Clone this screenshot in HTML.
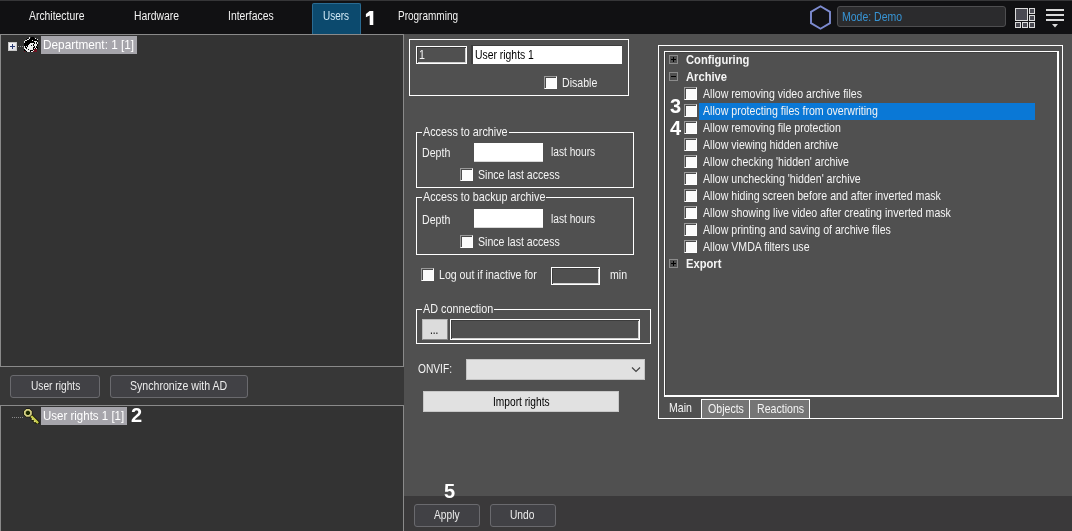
<!DOCTYPE html>
<html><head><meta charset="utf-8">
<style>
*{box-sizing:border-box;margin:0;padding:0}
html,body{width:1072px;height:531px;overflow:hidden;background:#505050;font-family:"Liberation Sans",sans-serif;color:#fff;position:relative}
div,span{position:absolute}
.t{white-space:nowrap;line-height:1;font-size:10.6px;color:#f4f4f4;transform:scaleY(1.22);transform-origin:0 85%;will-change:transform}
.b{font-weight:bold}
.num{white-space:nowrap;font-weight:bold;color:#fff;font-size:20px;line-height:1;will-change:transform}
#top{left:0;top:0;width:1072px;height:34px;background:#111113}
#topline{left:0;top:0;width:1072px;height:1px;background:#363638}
#users{left:312px;top:3px;width:49px;height:32px;background:#0c4a6e;border:1px solid #2a6b92;border-bottom:none;border-radius:2px 2px 0 0}
.tab{color:#f2f2f2;font-size:10.4px}
#mode{left:837px;top:6px;width:169px;height:21px;background:#2b2b2d;border:1px solid #4e4e50;border-radius:3px}
#left1{left:0;top:34px;width:404px;height:333px;background:#333;border-top:1px solid #8a8a8a;border-left:1px solid #8a8a8a;border-right:1px solid #8a8a8a;border-bottom:1px solid #8a8a8a}
#leftmid{left:0;top:367px;width:404px;height:38px;background:#373737}
#left2{left:0;top:405px;width:404px;height:126px;background:#333;border-top:1px solid #8a8a8a;border-left:1px solid #8a8a8a;border-right:1px solid #8a8a8a}
.dbtn{background:#414145;border:1px solid #6a6a6e;border-radius:3px}
.sel{background:#a6a5ab}
#bottom{left:404px;top:496px;width:668px;height:35px;background:#3a393a}
.w1{border:1px solid #fff}
.w2{border:2px solid #fff}
.gl{background:#505050;padding:0 1px}
.cb{width:13px;height:13px;background:#fbfbfb;border:1px solid;border-color:#9a9a9a #fff #fff #9a9a9a;box-shadow:inset 1px 1px 0 #4a4a4a}
.lbtn{background:#e1e1e1;border:1px solid #b4b4b4}
.tb{border:1px solid #8c8c8c;width:9px;height:9px}
</style></head><body>
<div id="top"></div>
<div id="topline"></div>
<div class="t tab" style="left:29px;top:12px">Architecture</div>
<div class="t tab" style="left:134px;top:12px">Hardware</div>
<div class="t tab" style="left:228px;top:12px">Interfaces</div>
<div id="users"></div>
<div class="t tab" style="left:323px;top:12px;color:#d2eaf7;font-size:10px">Users</div>
<svg style="position:absolute;left:360px;top:6px" width="20" height="24" viewBox="0 0 20 24"><polygon points="9.6,5 13.3,5 13.3,19 9.7,19 9.7,9.4 5.9,11.2 5.9,8.1" fill="#fff"/></svg>
<div class="t tab" style="left:398px;top:12px;font-size:10px">Programming</div>

<!-- hexagon -->
<svg style="position:absolute;left:808px;top:4px" width="26" height="26" viewBox="0 0 26 26"><polygon points="12.5,2.3 22,7.9 22,19.1 12.5,24.7 3,19.1 3,7.9" fill="none" stroke="#7d8bd0" stroke-width="1.9"/></svg>
<div id="mode"></div>
<div class="t" style="left:842px;top:12px;color:#3794d4;font-size:10.5px">Mode: Demo</div>
<!-- layout icon -->
<svg style="position:absolute;left:1014px;top:7px" width="23" height="22" viewBox="0 0 23 22">
<g fill="#4a4a52" stroke="#dcdcdc" stroke-width="1">
<rect x="1.5" y="1.5" width="12" height="12"/>
<rect x="15.5" y="1.5" width="5" height="5"/>
<rect x="15.5" y="8.5" width="5" height="5"/>
<rect x="1.5" y="15.5" width="5" height="5"/>
<rect x="8.5" y="15.5" width="5" height="5"/>
<rect x="15.5" y="15.5" width="5" height="5"/>
</g></svg>
<!-- menu icon -->
<svg style="position:absolute;left:1044px;top:7px" width="22" height="22" viewBox="0 0 22 22">
<g fill="#dadada"><rect x="2" y="2" width="18" height="2"/><rect x="2" y="7" width="18" height="2"/><rect x="2" y="12" width="18" height="2"/><polygon points="8,17 14,17 11,20.5"/></g></svg>

<div id="left1"></div>
<div id="leftmid"></div>
<div id="left2"></div>

<!-- tree 1 -->
<div style="left:8px;top:42px;width:9px;height:9px;background:linear-gradient(135deg,#fff,#d8d8e0);border:1px solid #c8c8c8"></div>
<div style="left:10px;top:46px;width:5px;height:1px;background:#2a3a70"></div>
<div style="left:12px;top:44px;width:1px;height:5px;background:#2a3a70"></div>
<div style="left:18px;top:46px;width:5px;height:1px;border-top:1px dotted #999"></div>
<svg style="position:absolute;left:23px;top:37px" width="16" height="16" viewBox="0 0 16 16" shape-rendering="crispEdges"><rect x="6" y="0" width="1" height="1" fill="#ececec"/><rect x="8" y="0" width="3" height="1" fill="#000"/><rect x="4" y="1" width="1" height="1" fill="#000"/><rect x="6" y="1" width="1" height="1" fill="#ececec"/><rect x="7" y="1" width="5" height="1" fill="#000"/><rect x="12" y="1" width="1" height="1" fill="#ececec"/><rect x="3" y="2" width="1" height="1" fill="#000"/><rect x="4" y="2" width="2" height="1" fill="#ececec"/><rect x="6" y="2" width="8" height="1" fill="#000"/><rect x="14" y="2" width="1" height="1" fill="#ececec"/><rect x="2" y="3" width="2" height="1" fill="#ececec"/><rect x="4" y="3" width="5" height="1" fill="#000"/><rect x="9" y="3" width="1" height="1" fill="#ececec"/><rect x="10" y="3" width="5" height="1" fill="#000"/><rect x="1" y="4" width="1" height="1" fill="#ececec"/><rect x="2" y="4" width="9" height="1" fill="#000"/><rect x="11" y="4" width="3" height="1" fill="#ececec"/><rect x="14" y="4" width="1" height="1" fill="#000"/><rect x="1" y="5" width="1" height="1" fill="#ececec"/><rect x="2" y="5" width="10" height="1" fill="#000"/><rect x="12" y="5" width="1" height="1" fill="#ececec"/><rect x="13" y="5" width="1" height="1" fill="#000"/><rect x="14" y="5" width="1" height="1" fill="#ececec"/><rect x="1" y="6" width="6" height="1" fill="#000"/><rect x="7" y="6" width="4" height="1" fill="#ececec"/><rect x="11" y="6" width="1" height="1" fill="#000"/><rect x="12" y="6" width="1" height="1" fill="#ececec"/><rect x="13" y="6" width="1" height="1" fill="#000"/><rect x="14" y="6" width="1" height="1" fill="#ececec"/><rect x="1" y="7" width="5" height="1" fill="#000"/><rect x="6" y="7" width="4" height="1" fill="#ececec"/><rect x="10" y="7" width="1" height="1" fill="#000"/><rect x="11" y="7" width="3" height="1" fill="#ececec"/><rect x="14" y="7" width="1" height="1" fill="#000"/><rect x="1" y="8" width="4" height="1" fill="#000"/><rect x="5" y="8" width="3" height="1" fill="#ececec"/><rect x="8" y="8" width="1" height="1" fill="#000"/><rect x="9" y="8" width="1" height="1" fill="#ececec"/><rect x="10" y="8" width="1" height="1" fill="#000"/><rect x="11" y="8" width="3" height="1" fill="#ececec"/><rect x="14" y="8" width="1" height="1" fill="#000"/><rect x="1" y="9" width="1" height="1" fill="#ececec"/><rect x="2" y="9" width="1" height="1" fill="#000"/><rect x="3" y="9" width="1" height="1" fill="#ececec"/><rect x="4" y="9" width="1" height="1" fill="#000"/><rect x="5" y="9" width="6" height="1" fill="#ececec"/><rect x="11" y="9" width="1" height="1" fill="#000"/><rect x="12" y="9" width="1" height="1" fill="#ececec"/><rect x="13" y="9" width="1" height="1" fill="#000"/><rect x="1" y="10" width="1" height="1" fill="#ececec"/><rect x="2" y="10" width="2" height="1" fill="#000"/><rect x="4" y="10" width="6" height="1" fill="#ececec"/><rect x="10" y="10" width="2" height="1" fill="#000"/><rect x="12" y="10" width="1" height="1" fill="#ececec"/><rect x="13" y="10" width="2" height="1" fill="#000"/><rect x="1" y="11" width="2" height="1" fill="#ececec"/><rect x="3" y="11" width="1" height="1" fill="#000"/><rect x="4" y="11" width="6" height="1" fill="#ececec"/><rect x="10" y="11" width="1" height="1" fill="#000"/><rect x="11" y="11" width="1" height="1" fill="#ececec"/><rect x="12" y="11" width="1" height="1" fill="#000"/><rect x="13" y="11" width="1" height="1" fill="#ececec"/><rect x="14" y="11" width="1" height="1" fill="#000"/><rect x="1" y="12" width="1" height="1" fill="#000"/><rect x="2" y="12" width="3" height="1" fill="#ececec"/><rect x="5" y="12" width="1" height="1" fill="#000"/><rect x="6" y="12" width="4" height="1" fill="#ececec"/><rect x="10" y="12" width="1" height="1" fill="#000"/><rect x="11" y="12" width="3" height="1" fill="#6e1420"/><rect x="1" y="13" width="2" height="1" fill="#000"/><rect x="3" y="13" width="4" height="1" fill="#ececec"/><rect x="7" y="13" width="3" height="1" fill="#000"/><rect x="10" y="13" width="1" height="1" fill="#ececec"/><rect x="11" y="13" width="3" height="1" fill="#6e1420"/><rect x="1" y="14" width="1" height="1" fill="#6e1420"/><rect x="3" y="14" width="1" height="1" fill="#000"/><rect x="4" y="14" width="3" height="1" fill="#ececec"/><rect x="7" y="14" width="1" height="1" fill="#000"/><rect x="8" y="14" width="2" height="1" fill="#ececec"/><rect x="10" y="14" width="4" height="1" fill="#6e1420"/></svg>
<div class="sel" style="left:41px;top:36px;width:96px;height:18px"></div>
<div class="t" style="left:43px;top:40px;font-size:11.8px;color:#fff;transform:scaleY(1.1)">Department: 1 [1]</div>

<div class="dbtn" style="left:10px;top:375px;width:90px;height:23px"></div>
<div class="t" style="left:31px;top:382px;font-size:10.2px;color:#ececec">User rights</div>
<div class="dbtn" style="left:110px;top:375px;width:138px;height:23px"></div>
<div class="t" style="left:130px;top:381px;font-size:10.6px;color:#ececec">Synchronize with AD</div>

<!-- tree 2 -->
<div style="left:12px;top:417px;width:11px;height:1px;border-top:1px dotted #8a8a8a"></div>
<svg style="position:absolute;left:22px;top:406px" width="18" height="18" viewBox="0 0 18 18">
<path d="M8.4,9.4 L15.6,16.6" stroke="#101000" stroke-width="4" stroke-linecap="round"/>
<path d="M11,12.6 L9.4,14.2 M13.2,14.8 L11.6,16.4" stroke="#101000" stroke-width="2.8"/>
<path d="M8.4,9.4 L15.4,16.4" stroke="#c6cc48" stroke-width="2.4" stroke-linecap="round"/>
<path d="M11,12.6 L9.8,13.8 M13.2,14.8 L12,16" stroke="#dcdc88" stroke-width="1.5"/>
<polygon points="8.95,8.16 7.16,9.95 4.64,9.95 2.85,8.16 2.85,5.64 4.64,3.85 7.16,3.85 8.95,5.64" fill="#1c2600" stroke="#0c0c00" stroke-width="2.8"/>
<polygon points="8.95,8.16 7.16,9.95 4.64,9.95 2.85,8.16 2.85,5.64 4.64,3.85 7.16,3.85 8.95,5.64" fill="#1c2a00" stroke="#d4cf84" stroke-width="1.8"/>
</svg>
<div class="sel" style="left:41px;top:407px;width:86px;height:18px"></div>
<div class="t" style="left:43px;top:411px;font-size:11.5px;color:#fff;transform:scaleY(1.1)">User rights 1 [1]</div>
<div class="num" style="left:131px;top:405px">2</div>

<!-- middle panel -->
<div class="w1" style="left:409px;top:39px;width:220px;height:57px"></div>
<div style="left:416px;top:46px;width:51px;height:18px;border:1px solid #fff;box-shadow:inset 1px 1px 0 #3c3c3c,inset -1px -1px 0 #d0d0d0"></div>
<div class="t" style="left:419px;top:50px;font-size:10.6px">1</div>
<div style="left:471px;top:45px;width:151px;height:19px;background:#fff;border-top:1px solid #3e3e3e;border-left:2px solid #3e3e3e"></div>
<div class="t" style="left:475px;top:51px;font-size:10.4px;color:#000">User rights 1</div>
<div class="cb" style="left:544px;top:76px"></div>
<div class="t" style="left:562px;top:78px">Disable</div>

<div class="w1" style="left:416px;top:132px;width:218px;height:56px"></div>
<div class="t gl" style="left:422px;top:127px;font-size:10.8px">Access to archive</div>
<div class="t" style="left:422px;top:148px">Depth</div>
<div style="left:474px;top:143px;width:69px;height:19px;background:#fff;border-bottom:1px solid #d8d8d8"></div>
<div class="t" style="left:551px;top:148px;font-size:10.2px">last hours</div>
<div class="cb" style="left:460px;top:168px"></div>
<div class="t" style="left:478px;top:170px">Since last access</div>

<div class="w1" style="left:416px;top:197px;width:218px;height:58px"></div>
<div class="t gl" style="left:422px;top:192px;font-size:10.8px">Access to backup archive</div>
<div class="t" style="left:422px;top:215px">Depth</div>
<div style="left:474px;top:209px;width:69px;height:19px;background:#fff;border-bottom:1px solid #d8d8d8"></div>
<div class="t" style="left:551px;top:215px;font-size:10.2px">last hours</div>
<div class="cb" style="left:460px;top:235px"></div>
<div class="t" style="left:478px;top:237px">Since last access</div>

<div class="cb" style="left:421px;top:268px"></div>
<div class="t" style="left:439px;top:270px">Log out if inactive for</div>
<div style="left:551px;top:267px;width:49px;height:18px;border:1px solid #fff;box-shadow:inset 1px 1px 0 #3c3c3c,inset -1px -1px 0 #d0d0d0"></div>
<div class="t" style="left:610px;top:270px">min</div>

<div class="w1" style="left:416px;top:309px;width:235px;height:35px"></div>
<div class="t gl" style="left:422px;top:304px;font-size:10.8px">AD connection</div>
<div class="lbtn" style="left:422px;top:319px;width:26px;height:21px;background:#dcdcdc;border-color:#bbb #888 #888 #bbb"></div>
<div class="t" style="left:430px;top:326px;color:#000;font-size:10px">...</div>
<div style="left:450px;top:319px;width:190px;height:21px;border:1px solid #fff;box-shadow:inset 1px 1px 0 #3c3c3c,inset -1px -1px 0 #d0d0d0"></div>

<div class="t" style="left:418px;top:365px;font-size:10.2px">ONVIF:</div>
<div class="lbtn" style="left:466px;top:359px;width:179px;height:21px;border-color:#c4c4c4"></div>
<svg style="position:absolute;left:631px;top:366px" width="10" height="7" viewBox="0 0 10 7"><path d="M1,1.5 L5,5.5 L9,1.5" fill="none" stroke="#444" stroke-width="1.2"/></svg>
<div class="lbtn" style="left:423px;top:391px;width:196px;height:21px;border-color:#c8c8c8"></div>
<div class="t" style="left:493px;top:398px;font-size:10.2px;color:#000">Import rights</div>

<!-- right panel -->
<div class="w1" style="left:658px;top:45px;width:405px;height:374px"></div>
<div style="left:664px;top:51px;width:395px;height:346px;border-style:solid;border-color:#fff;border-width:1px 2px 2px 1px;box-shadow:inset 1px 1px 0 #404040"></div>

<div class="tb" style="left:669px;top:55px"></div>
<div style="left:671px;top:59px;width:5px;height:1px;background:#000"></div>
<div style="left:673px;top:57px;width:1px;height:5px;background:#000"></div>
<div class="t b" style="left:686px;top:55px;font-size:11.2px">Configuring</div>
<div class="tb" style="left:669px;top:72px"></div>
<div style="left:671px;top:76px;width:5px;height:1px;background:#000"></div>
<div class="t b" style="left:686px;top:72px;font-size:11.2px">Archive</div>

<div style="left:699px;top:103px;width:336px;height:17px;background:#0a78d6"></div>
<div class="cb" style="left:684px;top:87px"></div>
<div class="t" style="left:703px;top:89px">Allow removing video archive files</div>
<div class="cb" style="left:684px;top:104px"></div>
<div class="t" style="left:703px;top:106px">Allow protecting files from overwriting</div>
<div class="cb" style="left:684px;top:121px"></div>
<div class="t" style="left:703px;top:123px">Allow removing file protection</div>
<div class="cb" style="left:684px;top:138px"></div>
<div class="t" style="left:703px;top:140px">Allow viewing hidden archive</div>
<div class="cb" style="left:684px;top:155px"></div>
<div class="t" style="left:703px;top:157px">Allow checking 'hidden' archive</div>
<div class="cb" style="left:684px;top:172px"></div>
<div class="t" style="left:703px;top:174px">Allow unchecking 'hidden' archive</div>
<div class="cb" style="left:684px;top:189px"></div>
<div class="t" style="left:703px;top:191px">Allow hiding screen before and after inverted mask</div>
<div class="cb" style="left:684px;top:206px"></div>
<div class="t" style="left:703px;top:208px">Allow showing live video after creating inverted mask</div>
<div class="cb" style="left:684px;top:223px"></div>
<div class="t" style="left:703px;top:225px">Allow printing and saving of archive files</div>
<div class="cb" style="left:684px;top:240px"></div>
<div class="t" style="left:703px;top:242px">Allow VMDA filters use</div>
<div class="tb" style="left:669px;top:259px"></div>
<div style="left:671px;top:263px;width:5px;height:1px;background:#000"></div>
<div style="left:673px;top:261px;width:1px;height:5px;background:#000"></div>
<div class="t b" style="left:686px;top:259px;font-size:11.2px">Export</div>
<div class="num" style="left:670px;top:96px;font-size:20px">3</div>
<div class="num" style="left:670px;top:118px;font-size:20px">4</div>

<!-- tabs -->
<div style="left:701px;top:399px;width:49px;height:20px;background:#757575;border:1px solid #fff"></div>
<div style="left:749px;top:399px;width:61px;height:20px;background:#757575;border:1px solid #fff"></div>
<div class="t" style="left:669px;top:403px">Main</div>
<div class="t" style="left:708px;top:404px">Objects</div>
<div class="t" style="left:757px;top:404px">Reactions</div>

<div id="bottom"></div>
<div class="dbtn" style="left:414px;top:504px;width:66px;height:23px"></div>
<div class="t" style="left:434px;top:511px;font-size:10.2px;color:#ececec">Apply</div>
<div class="dbtn" style="left:490px;top:504px;width:66px;height:23px"></div>
<div class="t" style="left:510px;top:511px;font-size:10.2px;color:#ececec">Undo</div>
<div class="num" style="left:444px;top:481px">5</div>

</body></html>
